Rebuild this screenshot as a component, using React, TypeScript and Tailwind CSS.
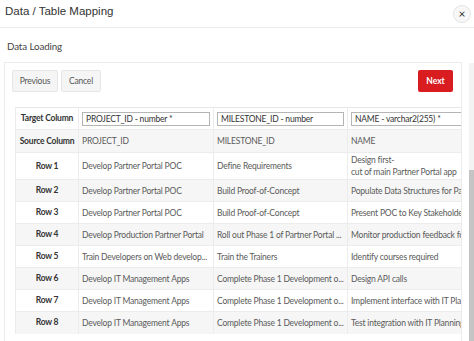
import React from "react";

const rows = [
  ["Develop Partner Portal POC", "Define Requirements", "Design first-\ncut of main Partner Portal app"],
  ["Develop Partner Portal POC", "Build Proof-of-Concept", "Populate Data Structures for Partner Portal"],
  ["Develop Partner Portal POC", "Build Proof-of-Concept", "Present POC to Key Stakeholders"],
  ["Develop Production Partner Portal", "Roll out Phase 1 of Partner Portal ...", "Monitor production feedback for"],
  ["Train Developers on Web develop...", "Train the Trainers", "Identify courses required"],
  ["Develop IT Management Apps", "Complete Phase 1 Development o...", "Design API calls"],
  ["Develop IT Management Apps", "Complete Phase 1 Development o...", "Implement interface with IT Planning"],
  ["Develop IT Management Apps", "Complete Phase 1 Development o...", "Test integration with IT Planning"],
];

const targets = ["PROJECT_ID - number *", "MILESTONE_ID - number", "NAME - varchar2(255) *"];
const sources = ["PROJECT_ID", "MILESTONE_ID", "NAME"];

export default function App() {
  return (
    <div className="w-[474px] h-[341px] overflow-hidden bg-white text-[#333] flex flex-col" style={{ fontFamily: 'Lato, "Noto Sans", sans-serif' }}>
      {/* Header */}
      <div className="h-[28px] flex items-center justify-between pl-[5px] pr-[3px] border-b border-[#ececec] shrink-0">
        <span className="text-[11.5px] leading-none pb-[3px] text-[#333]" style={{ fontFamily: '"Liberation Sans", Arial, sans-serif' }}>Data / Table Mapping</span>
        <button className="w-[18px] h-[18px] rounded-full border border-[#e4e4e4] bg-[#f7f7f7] flex items-center justify-center text-[12px] leading-none text-[#333]">
          ×
        </button>
      </div>

      <div className="flex-1 flex min-h-0">
        <div className="flex-1 flex flex-col min-w-0">
          <div className="pl-[7px] pt-[11px] h-[34px] text-[9.75px] tracking-[-0.1px] text-[#444] shrink-0">Data Loading</div>

          {/* Card */}
          <div className="ml-[4px] w-[458px] flex-1 border-t border-l border-r border-[#ececec] flex flex-col min-h-0 overflow-hidden">
            <div className="flex items-center justify-between px-[7px] pt-[7px] pb-[15px] shrink-0">
              <div className="flex gap-[3px]">
                <button className="h-[22px] w-[46px] bg-[#f5f5f5] border border-[#e6e6e6] rounded-[2px] text-[8.5px] tracking-[-0.2px] text-[#555]">Previous</button>
                <button className="h-[22px] w-[40px] bg-[#f5f5f5] border border-[#e6e6e6] rounded-[2px] text-[8.5px] tracking-[-0.2px] text-[#555]">Cancel</button>
              </div>
              <button className="h-[22px] w-[35px] mr-[1px] bg-[#d81c1f] rounded-[2px] text-[8.5px] font-bold text-white">Next</button>
            </div>

            <div className="ml-[10px] overflow-hidden">
              <table className="border-collapse text-[8.5px] tracking-[-0.2px] text-[#5a5a5a] table-fixed w-[480px]">
                <colgroup>
                  <col className="w-[63px]" />
                  <col className="w-[135px]" />
                  <col className="w-[134px]" />
                  <col className="w-[148px]" />
                </colgroup>
                <tbody>
                  <tr className="h-[22px] border-t border-[#e6e6e6]">
                    <td className="font-bold text-[#333] text-center whitespace-nowrap border-r border-[#ececec] border-l">Target Column</td>
                    {targets.map(t => (
                      <td key={t} className="px-[3px] border-r border-[#ececec]">
                        <div className="h-[14px] border border-[#b5b5b5] bg-white text-[#333] px-[3px] leading-[12px] whitespace-nowrap overflow-hidden">{t}</div>
                      </td>
                    ))}
                  </tr>
                  <tr className="h-[23px] bg-[#f6f6f6] border-t border-[#ececec]">
                    <td className="font-bold text-[#333] text-center whitespace-nowrap border-r border-[#ececec] border-l">Source Column</td>
                    {sources.map(s => (
                      <td key={s} className="px-[3px] border-r border-[#ececec] whitespace-nowrap">{s}</td>
                    ))}
                  </tr>
                  {rows.map((r, i) => (
                    <tr key={i} className={`${i === 0 ? "h-[27px]" : "h-[22px]"} ${i % 2 === 1 ? "bg-[#f6f6f6]" : "bg-white"} border-t border-[#ececec]`}>
                      <td className="font-bold text-[#333] text-center whitespace-nowrap border-r border-[#ececec] border-l">Row {i + 1}</td>
                      {r.map((c, j) => (
                        <td key={j} className="px-[3px] border-r border-[#ececec] whitespace-pre overflow-hidden leading-[12px]">{c}</td>
                      ))}
                    </tr>
                  ))}
                </tbody>
              </table>
            </div>
          </div>
        </div>

        {/* Scrollbar */}
        <div className="w-[5px] mt-[35px] bg-[#f3f3f3] flex flex-col shrink-0">
          <div className="h-[107px]" />
          <div className="flex-1 bg-[#c4c4c4]" />
        </div>
      </div>
    </div>
  );
}
